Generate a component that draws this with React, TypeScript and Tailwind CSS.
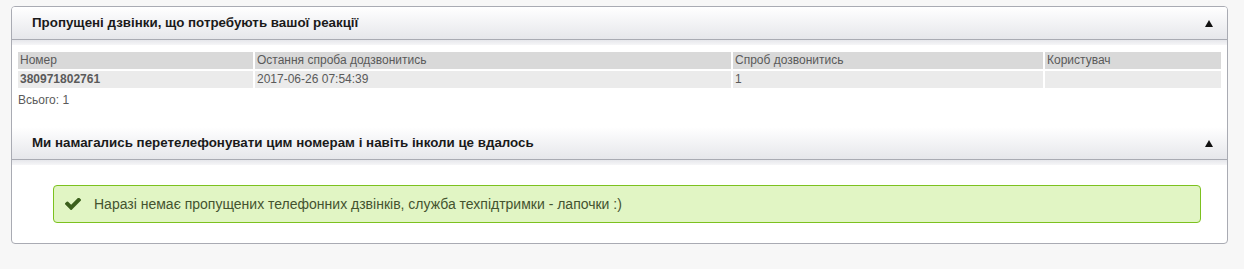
const rows = [
  { number: '380971802761', last: '2017-06-26 07:54:39', tries: '1', user: '' },
];

function PanelHeader({ title }: { title: string }) {
  return (
    <div>
      <div className="h-[33px] flex items-center justify-between pl-[20px] pr-[14px] bg-gradient-to-b from-white to-[#e6e7eb] border-b border-[#a9abb3]">
        <span className="text-[13.35px] font-bold text-[#1a1a1a]">{title}</span>
        <svg width="8" height="7" viewBox="0 0 8 7">
          <polygon points="4,0 8,7 0,7" fill="#111" />
        </svg>
      </div>
      <div className="h-[5px] bg-gradient-to-b from-[#e6e7eb] to-[#f6f6f8]" />
    </div>
  );
}

export default function App() {
  return (
    <div
      className="h-[269px] bg-[#f7f7f7] pt-[6px] pl-[11px]"
      style={{ fontFamily: '"Liberation Sans", Arial, sans-serif' }}
    >
      <div className="w-[1217px] h-[238px] bg-white border border-[#a9abb3] rounded-[4px] overflow-hidden">
        <PanelHeader title="Пропущені дзвінки, що потребують вашої реакції" />

        {/* Table */}
        <div className="px-[4px] pt-[5px]">
          <table className="w-full border-separate border-spacing-[2px] text-[12px] text-[#5a5a5a]">
            <thead>
              <tr className="h-[17px]">
                <th className="w-[235px] bg-[#d9d9d9] font-normal text-left pl-[2px] p-0 leading-[17px]">Номер</th>
                <th className="w-[476px] bg-[#d9d9d9] font-normal text-left pl-[2px] p-0 leading-[17px]">Остання спроба додзвонитись</th>
                <th className="w-[310px] bg-[#d9d9d9] font-normal text-left pl-[2px] p-0 leading-[17px]">Спроб дозвонитись</th>
                <th className="bg-[#d9d9d9] font-normal text-left pl-[2px] p-0 leading-[17px]">Користувач</th>
              </tr>
            </thead>
            <tbody>
              {rows.map((r) => (
                <tr key={r.number} className="h-[17px]">
                  <td className="bg-[#ebebeb] pl-[2px] leading-[17px] font-bold">{r.number}</td>
                  <td className="bg-[#ebebeb] pl-[2px] leading-[17px]">{r.last}</td>
                  <td className="bg-[#ebebeb] pl-[2px] leading-[17px]">{r.tries}</td>
                  <td className="bg-[#ebebeb] pl-[2px] leading-[17px]">{r.user}</td>
                </tr>
              ))}
            </tbody>
          </table>
          <div className="pl-[2px] text-[12px] text-[#5a5a5a] leading-[14px] mt-[3px]">Всього: 1</div>
        </div>

        <div className="mt-[20px]">
          <PanelHeader title="Ми намагались перетелефонувати цим номерам і навіть інколи це вдалось" />
        </div>

        {/* Alert */}
        <div className="ml-[41px] mr-[26px] mt-[20px] h-[38px] flex items-center gap-[13px] pl-[11px] bg-[#e1f5c4] border border-[#7cc11f] rounded-[4px]">
          <svg width="16" height="12" viewBox="121 374 1550 1148" className="shrink-0">
            <path
              fill="#3b5f1c"
              d="M1671 566q0 40-28 68l-724 724-136 136q-28 28-68 28t-68-28l-136-136-362-362q-28-28-28-68t28-68l136-136q28-28 68-28t68 28l294 295 656-657q28-28 68-28t68 28l136 136q28 28 28 68z"
            />
          </svg>
          <span className="text-[14px] text-[#44532f]">Наразі немає пропущених телефонних дзвінків, служба техпідтримки - лапочки :)</span>
        </div>
      </div>
    </div>
  );
}
